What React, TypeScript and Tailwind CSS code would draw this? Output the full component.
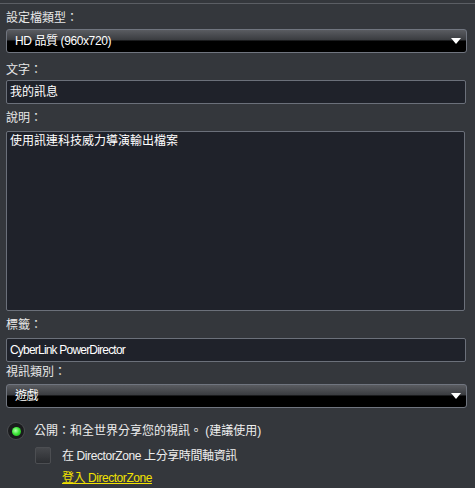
const font = { fontFamily: '"Liberation Sans", "Noto Sans CJK TC", sans-serif' };

const Label = ({ text, className = "" }: { text: string; className?: string }) => (
  <div className={`h-[18px] leading-[18px] text-[12px] text-[#e8e8e8] ${className}`}>{text}</div>
);

const Dropdown = ({ value, className = "" }: { value: string; className?: string }) => (
  <div
    className={`relative h-[24px] rounded-[3px] border border-[#70757f] overflow-hidden bg-[linear-gradient(to_bottom,#5a5c61_0%,#3a3c40_45%,#000_50%,#000_100%)] ${className}`}
  >
    <div className="absolute left-[8px] top-0 h-full leading-[22px] text-[12px] tracking-[-0.4px] text-white">{value}</div>
    {/* arrow */}
    <svg className="absolute right-[5px] top-[8px]" width="10" height="7" viewBox="0 0 10 7">
      <path d="M0 0 H10 L5 6 Z" fill="#ffffff" />
    </svg>
  </div>
);

const Input = ({ value, className = "" }: { value: string; className?: string }) => (
  <div
    className={`h-[24px] rounded-[2px] border border-[#6b707a] bg-[#1f222a] pl-[3px] leading-[22px] text-[12px] text-white ${className}`}
  >
    {value}
  </div>
);

export default function App() {
  return (
    <div className="w-[475px] h-[488px] bg-[#34373c] overflow-hidden" style={font}>
      <div className="h-[3px]" />
      <div className="h-px bg-[#5b5e64]" />

      <div className="pl-[6px] pr-[8px]">
        <Label text="設定檔類型：" className="mt-[5px]" />
        <Dropdown value="HD 品質 (960x720)" className="mt-[2px]" />

        <Label text="文字：" className="mt-[8px]" />
        <Input value="我的訊息" className="mt-px mr-px" />

        <Label text="說明：" className="mt-[5px]" />
        <div className="mt-[4px] mr-[2px] h-[180px] rounded-[2px] border border-[#6b707a] bg-[#1f222a] pl-[3px] pt-[1px] leading-[16px] text-[12px] text-white">
          使用訊連科技威力導演輸出檔案
        </div>

        <Label text="標籤：" className="mt-[5px]" />
        <Input value="CyberLink PowerDirector" className="mt-[4px] mr-px tracking-[-0.8px]" />

        <Label text="視訊類別：" className="mt-[1px]" />
        <Dropdown value="遊戲" className="mt-[3px]" />
      </div>

      {/* public radio */}
      <div className="mt-[14px] flex h-[18px] items-center pl-[8px]">
        <div className="flex h-[16px] w-[16px] items-center justify-center rounded-full bg-[#1a1b1d] shadow-[0_0_0_1px_#4a4c50]">
          <div className="h-[9px] w-[9px] rounded-full bg-[radial-gradient(circle_at_40%_40%,#b6ffb0_0%,#3fe83a_45%,#159a14_100%)]" />
        </div>
        <span className="ml-[10px] text-[12px] text-[#eeeeee]">公開：和全世界分享您的視訊。 (建議使用)</span>
      </div>

      {/* share checkbox */}
      <div className="mt-[7px] flex h-[17px] items-center pl-[35px]">
        <div className="h-[17px] w-[16px] rounded-[2px] border border-[#4c4e52] bg-[linear-gradient(to_bottom,#46484c,#2c2e32)]" />
        <span className="ml-[11px] text-[12px] tracking-[-0.4px] text-[#eeeeee]">在 DirectorZone 上分享時間軸資訊</span>
      </div>
      <div className="mt-[4px] h-[18px] pl-[62px] leading-[18px]">
        <a className="text-[12px] tracking-[-0.45px] text-[#f2e200] underline">登入 DirectorZone</a>
      </div>
    </div>
  );
}
